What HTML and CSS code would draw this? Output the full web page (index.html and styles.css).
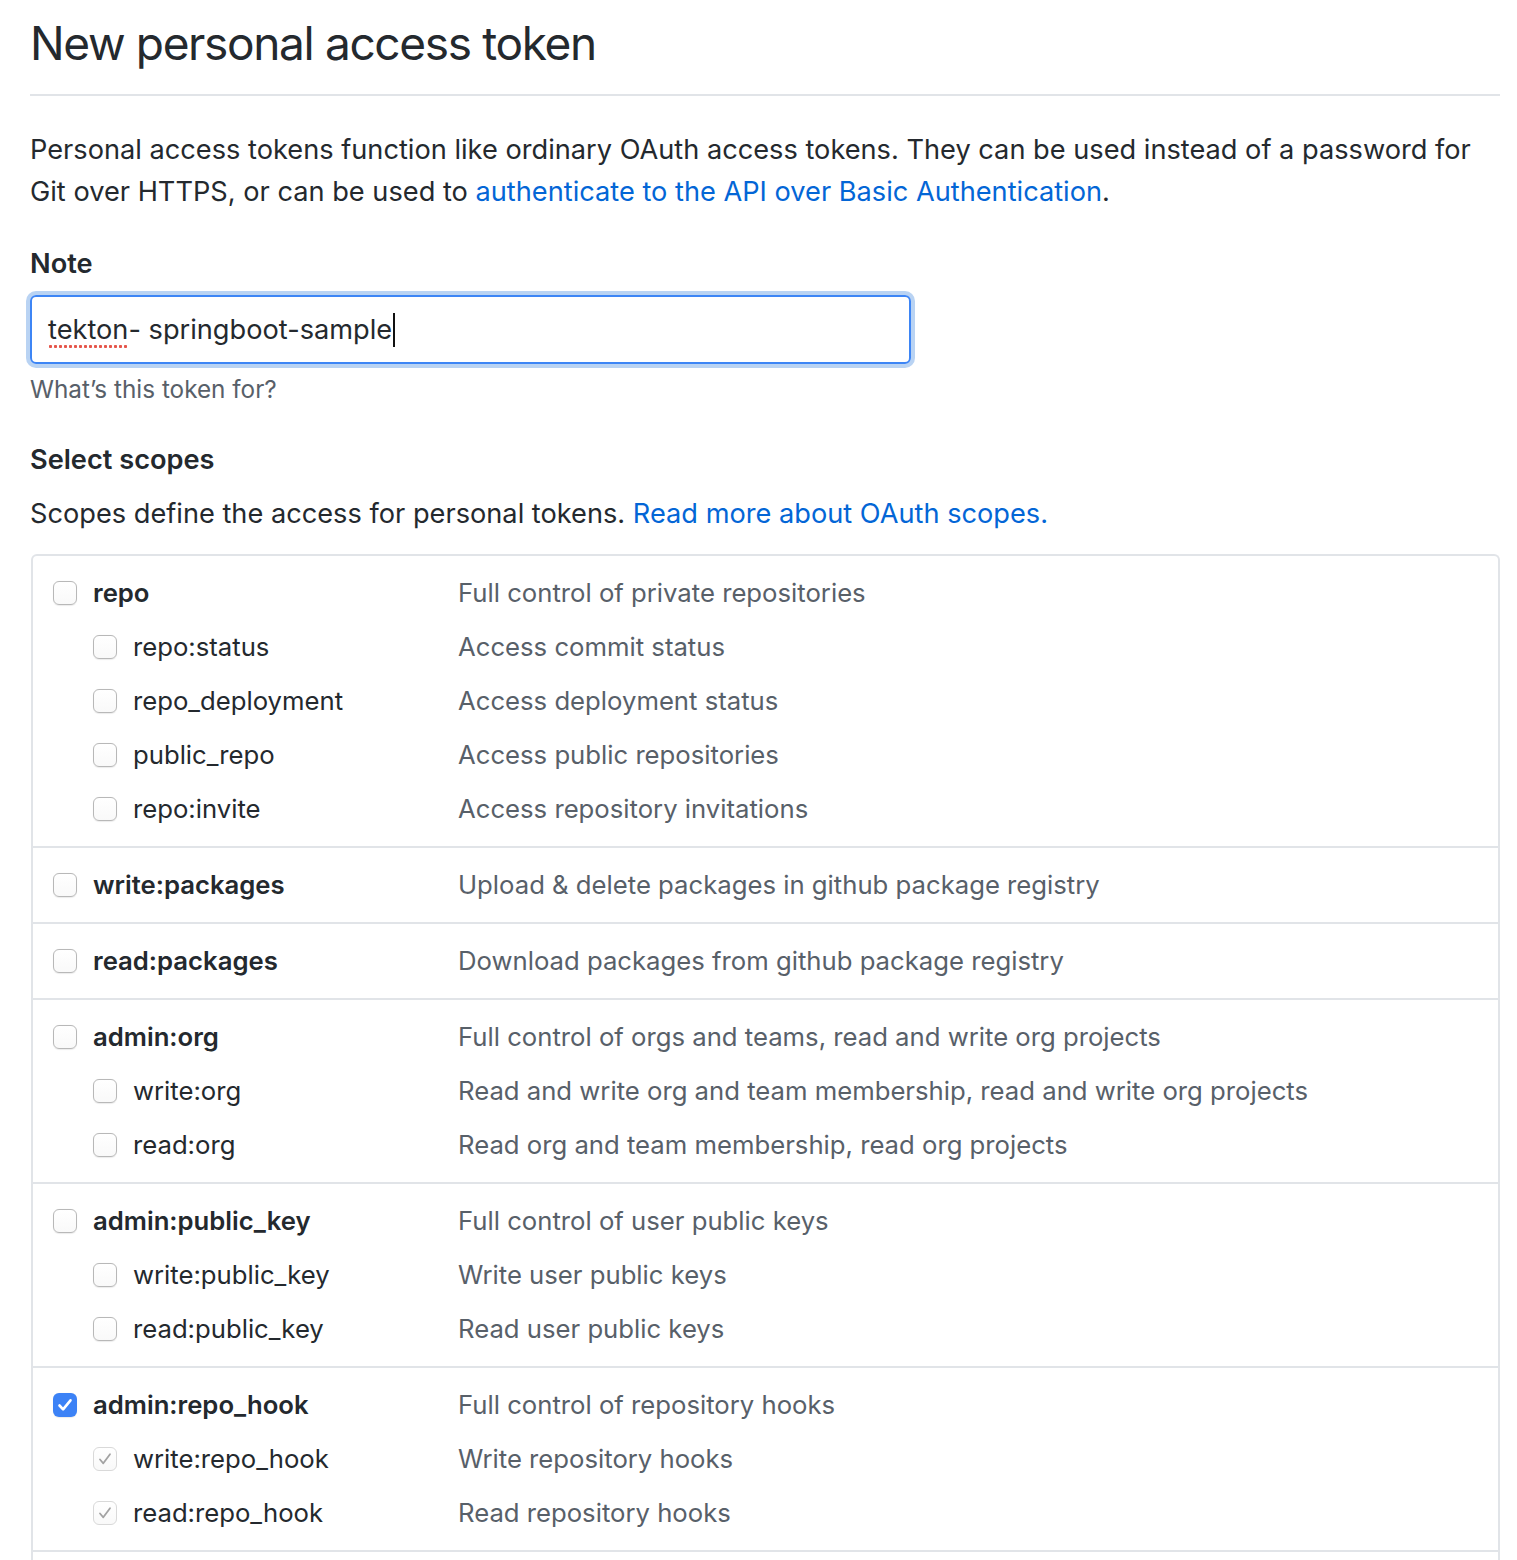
FILE: index.html
```html
<!DOCTYPE html>
<html>
<head>
<meta charset="utf-8">
<link rel="stylesheet" href="styles.css">
</head>
<body>
<div class="page">
  <h1 class="title">New personal access token</h1>
  <p class="intro">Personal access tokens function like ordinary OAuth access tokens. They can be used instead of a password for Git over HTTPS, or can be used to <a href="#" class="link">authenticate to the API over Basic Authentication</a>.</p>

  <div class="field-label">Note</div>
  <div class="note-input"><span class="misspelled">tekton</span>- springboot-sample<span class="caret"></span></div>
  <div class="hint">What’s this token for?</div>

  <div class="section-title">Select scopes</div>
  <p class="scopes-intro">Scopes define the access for personal tokens. <a href="#" class="link">Read more about OAuth scopes.</a></p>

  <div class="scopes">
    <div class="group">
      <div class="row"><div class="name parent"><span class="cb"></span>repo</div><div class="desc">Full control of private repositories</div></div>
      <div class="row"><div class="name child"><span class="cb"></span>repo:status</div><div class="desc">Access commit status</div></div>
      <div class="row"><div class="name child"><span class="cb"></span>repo_deployment</div><div class="desc">Access deployment status</div></div>
      <div class="row"><div class="name child"><span class="cb"></span>public_repo</div><div class="desc">Access public repositories</div></div>
      <div class="row"><div class="name child"><span class="cb"></span>repo:invite</div><div class="desc">Access repository invitations</div></div>
    </div>
    <div class="group">
      <div class="row"><div class="name parent"><span class="cb"></span>write:packages</div><div class="desc">Upload &amp; delete packages in github package registry</div></div>
    </div>
    <div class="group">
      <div class="row"><div class="name parent"><span class="cb"></span>read:packages</div><div class="desc">Download packages from github package registry</div></div>
    </div>
    <div class="group">
      <div class="row"><div class="name parent"><span class="cb"></span>admin:org</div><div class="desc">Full control of orgs and teams, read and write org projects</div></div>
      <div class="row"><div class="name child"><span class="cb"></span>write:org</div><div class="desc">Read and write org and team membership, read and write org projects</div></div>
      <div class="row"><div class="name child"><span class="cb"></span>read:org</div><div class="desc">Read org and team membership, read org projects</div></div>
    </div>
    <div class="group">
      <div class="row"><div class="name parent"><span class="cb"></span>admin:public_key</div><div class="desc">Full control of user public keys</div></div>
      <div class="row"><div class="name child"><span class="cb"></span>write:public_key</div><div class="desc">Write user public keys</div></div>
      <div class="row"><div class="name child"><span class="cb"></span>read:public_key</div><div class="desc">Read user public keys</div></div>
    </div>
    <div class="group">
      <div class="row"><div class="name parent"><span class="cb checked"><svg viewBox="0 0 24 24" width="24" height="24"><path d="M6.5 12.5l3.6 3.8 7.4-9" fill="none" stroke="#fff" stroke-width="2.6" stroke-linecap="round" stroke-linejoin="round"/></svg></span>admin:repo_hook</div><div class="desc">Full control of repository hooks</div></div>
      <div class="row"><div class="name child"><span class="cb disabled"><svg viewBox="0 0 24 24" width="24" height="24"><path d="M7 12.5l3.3 3.8 6.7-9" fill="none" stroke="#a3a3a3" stroke-width="1.8" stroke-linecap="round" stroke-linejoin="round"/></svg></span>write:repo_hook</div><div class="desc">Write repository hooks</div></div>
      <div class="row"><div class="name child"><span class="cb disabled"><svg viewBox="0 0 24 24" width="24" height="24"><path d="M7 12.5l3.3 3.8 6.7-9" fill="none" stroke="#a3a3a3" stroke-width="1.8" stroke-linecap="round" stroke-linejoin="round"/></svg></span>read:repo_hook</div><div class="desc">Read repository hooks</div></div>
    </div>
    <div class="group-tail"></div>
  </div>
</div>
</body>
</html>
```

FILE: styles.css
```css
html, body {
  margin: 0;
  padding: 0;
  background: #fff;
}
body {
  font-family: Inter, "Noto Sans", "Liberation Sans", sans-serif;
  color: #24292e;
  font-size: 27.2px;
  line-height: 42px;
}
.page {
  padding: 0 17px 0 30px;
}
.title {
  margin: 0;
  padding: 14px 0 22px;
  font-size: 46px;
  line-height: 58px;
  font-weight: 400;
  letter-spacing: -1.35px;
  border-bottom: 2px solid #e1e4e8;
}
.intro {
  margin: 33px 0 0;
}
.link {
  color: #0366d6;
  text-decoration: none;
}
.field-label {
  margin-top: 30px;
  font-weight: 600;
}
.note-input {
  margin-top: 10px;
  width: 881px;
  height: 69px;
  box-sizing: border-box;
  border: 2px solid #3d85f5;
  border-radius: 6px;
  box-shadow: 0 0 0 4px #b9d3f3;
  padding: 0 16px;
  display: flex;
  align-items: center;
  white-space: pre;
}
.misspelled {
  background: radial-gradient(circle, #e5564b 1.3px, transparent 1.9px) 0 calc(100% - 2px) / 5px 5px repeat-x;
}
.caret {
  display: inline-block;
  width: 2px;
  height: 34px;
  background: #111;
  margin-left: 1px;
}
.hint {
  margin-top: 7px;
  font-size: 24.3px;
  line-height: 36px;
  color: #586069;
}
.section-title {
  margin-top: 32px;
  font-weight: 600;
}
.scopes-intro {
  margin: 12px 0 0;
}
.scopes {
  margin: 19px 0 0 1px;
  border: 2px solid #e1e4e8;
  border-bottom: none;
  border-radius: 6px 6px 0 0;
  font-size: 25.7px;
}
.group {
  padding: 10px 0;
  border-bottom: 2px solid #e1e4e8;
}
.group-tail {
  height: 40px;
}
.row {
  display: flex;
  align-items: center;
  height: 54px;
}
.name {
  display: flex;
  align-items: center;
  gap: 16px;
  box-sizing: border-box;
  width: 425px;
  padding-left: 20px;
}
.name.child {
  padding-left: 60px;
}
.name.parent {
  font-weight: 600;
}
.desc {
  color: #586069;
}
.cb {
  flex: none;
  width: 24px;
  height: 24px;
  box-sizing: border-box;
  border: 1.5px solid #b8b8b8;
  border-radius: 6px;
  background: linear-gradient(#fff, #f9f9f9);
  box-shadow: 0 0.5px 1px rgba(0, 0, 0, 0.08);
  display: flex;
  align-items: center;
  justify-content: center;
  overflow: hidden;
}
.cb svg {
  flex: none;
}
.cb.checked {
  border: none;
  background: #3c82f6;
}
.cb.disabled {
  border-color: #d9d9d9;
  box-shadow: none;
}
```
